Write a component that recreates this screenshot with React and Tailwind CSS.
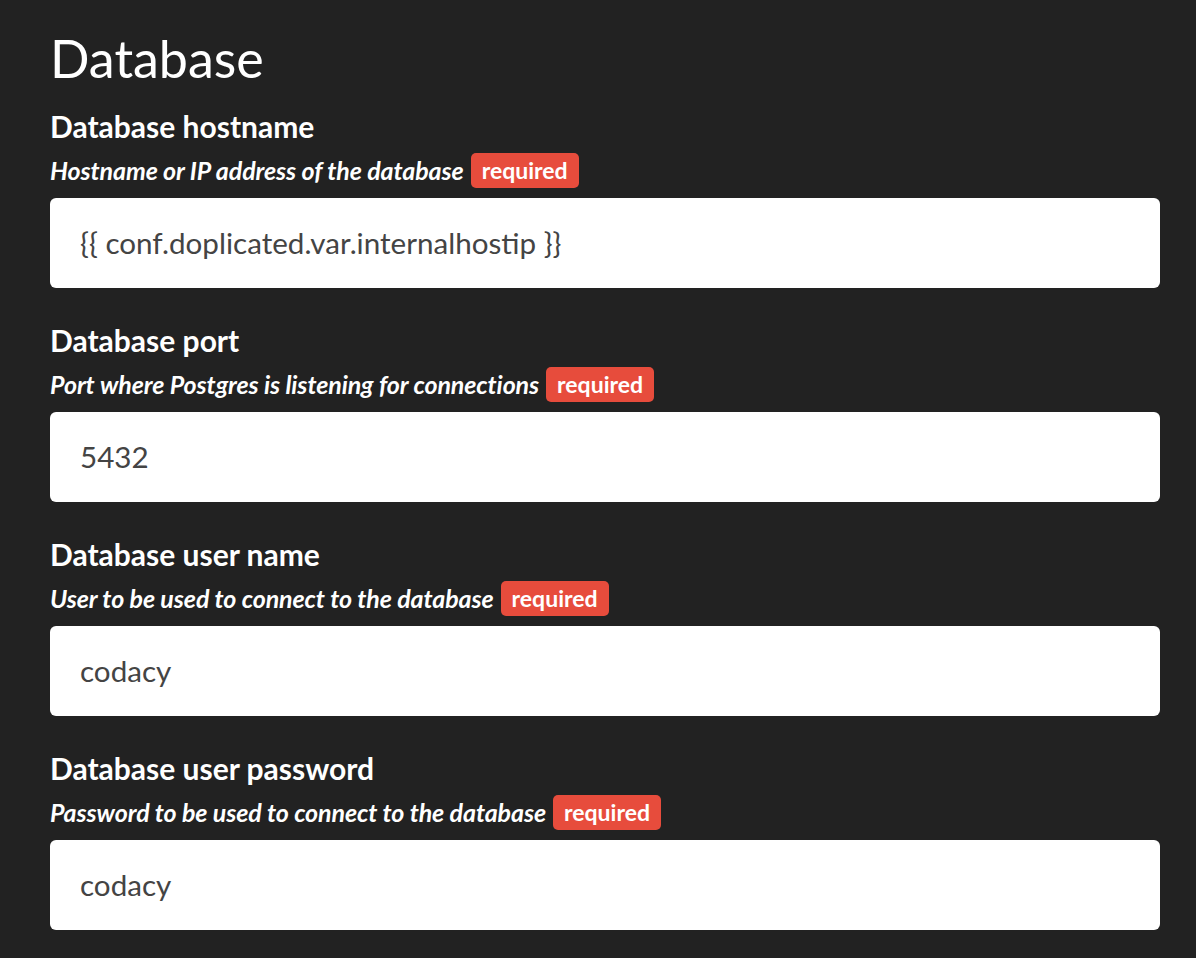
const fields = [
  {
    label: 'Database hostname',
    help: 'Hostname or IP address of the database',
    value: '{{ conf.doplicated.var.internalhostip }}',
  },
  {
    label: 'Database port',
    help: 'Port where Postgres is listening for connections',
    value: '5432',
  },
  {
    label: 'Database user name',
    help: 'User to be used to connect to the database',
    value: 'codacy',
  },
  {
    label: 'Database user password',
    help: 'Password to be used to connect to the database',
    value: 'codacy',
  },
];

const Field = ({ label, help, value }) => (
  <div className="mb-[36px]">
    <div className="text-[30px] leading-[32px] font-bold text-white">{label}</div>
    <div className="mt-[11px] flex items-center h-[35px]">
      <span className="italic font-bold text-[25px] text-white tracking-[-0.1px]">{help}</span>
      <span className="ml-[7px] h-[35px] flex items-center px-[11px] rounded-[5px] bg-[#e74c3c] text-white font-bold text-[23px]">
        required
      </span>
    </div>
    <div className="mt-[10px] h-[90px] bg-white rounded-[6px] flex items-center pl-[30px] text-[29.6px] text-[#444]">
      {value}
    </div>
  </div>
);

export default function App() {
  return (
    <div
      className="min-h-screen bg-[#222] pl-[50px] pr-[36px] pt-[28px]"
      style={{ fontFamily: 'Lato, "Open Sans", sans-serif' }}
    >
      <h1 className="text-[52px] leading-[60px] font-normal text-white mb-[22px]">Database</h1>
      {fields.map((f) => (
        <Field key={f.label} {...f} />
      ))}
    </div>
  );
}
